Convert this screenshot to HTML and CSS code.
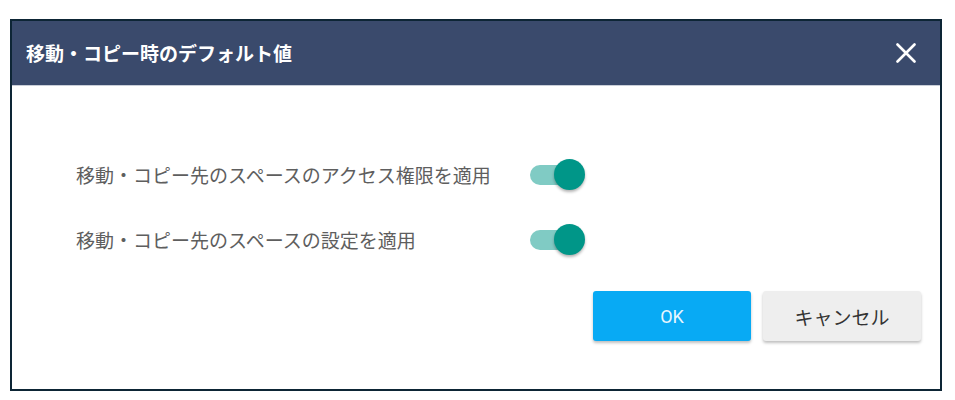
FILE: index.html
```html
<!DOCTYPE html>
<html lang="ja">
<head>
<meta charset="utf-8">
<link rel="stylesheet" href="styles.css">
</head>
<body>
<div class="dialog">
  <div class="header">
    <div class="title">移動・コピー時のデフォルト値</div>
    <button class="close" aria-label="close">
      <svg width="20" height="20" viewBox="0 0 20 20"><path d="M1.5 1.5 L18.5 18.5 M18.5 1.5 L1.5 18.5" stroke="#fff" stroke-width="2.6" stroke-linecap="round" fill="none"/></svg>
    </button>
  </div>
  <div class="content">
    <div class="row">
      <span class="label">移動・コピー先のスペースのアクセス権限を適用</span>
      <span class="toggle"><span class="track"></span><span class="thumb"></span></span>
    </div>
    <div class="row">
      <span class="label">移動・コピー先のスペースの設定を適用</span>
      <span class="toggle"><span class="track"></span><span class="thumb"></span></span>
    </div>
    <div class="actions">
      <button class="btn ok">OK</button>
      <button class="btn cancel">キャンセル</button>
    </div>
  </div>
</div>
</body>
</html>
```

FILE: styles.css
```css
* { box-sizing: border-box; }
html, body { margin: 0; padding: 0; background: #fff; }
body { font-family: "Noto Sans CJK JP", "Noto Sans", sans-serif; }

.dialog {
  margin: 19px 0 0 10px;
  width: 932px;
  height: 372px;
  border: 2px solid #0d2535;
  background: #fff;
  display: flex;
  flex-direction: column;
}

.header {
  height: 65px;
  background: #3a4a6c;
  border-bottom: 1px solid #c9ced8;
  display: flex;
  align-items: center;
  justify-content: space-between;
  padding: 0 24px 0 14px;
}

.title {
  color: #fff;
  font-size: 19px;
  font-weight: 700;
  line-height: 1;
  margin-top: -2px;
}

.close {
  background: none;
  border: 0;
  padding: 0;
  width: 20px;
  height: 20px;
  display: flex;
  cursor: pointer;
}

.content {
  flex: 1;
  padding: 69px 19px 0 64px;
  display: flex;
  flex-direction: column;
}

.row {
  height: 40px;
  display: flex;
  align-items: center;
}
.row + .row { margin-top: 25px; }

.label {
  width: 454px;
  font-size: 19px;
  color: #5e5e5e;
  line-height: 1;
  margin-top: -2px;
}

.toggle {
  position: relative;
  width: 58px;
  height: 32px;
  display: block;
}
.track {
  position: absolute;
  left: 0;
  top: 6px;
  width: 50px;
  height: 20px;
  border-radius: 10px;
  background: #80cbc4;
}
.thumb {
  position: absolute;
  left: 24px;
  top: 0;
  width: 31px;
  height: 31px;
  border-radius: 50%;
  background: #009688;
  box-shadow: 0 2px 3px rgba(0,0,0,0.3);
}

.actions {
  margin-top: 31px;
  display: flex;
  justify-content: flex-end;
  gap: 12px;
}

.btn {
  width: 158px;
  height: 50px;
  border: 0;
  border-radius: 3px;
  font-family: "Noto Sans CJK JP", "Noto Sans", sans-serif;
  font-size: 19px;
  box-shadow: 0 2px 3px rgba(0,0,0,0.25);
  cursor: pointer;
}
.ok {
  background: #08aaf4;
  color: #e8f6fe;
  font-family: Roboto, "Noto Sans", sans-serif;
  font-size: 18px;
}
.cancel {
  background: #eeeeee;
  color: #333;
}
```
